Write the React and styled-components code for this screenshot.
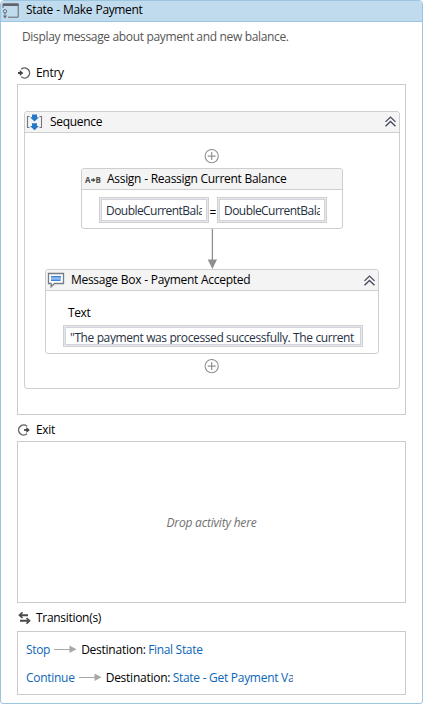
import React from "react";
import styled, { createGlobalStyle } from "styled-components";

const GlobalStyle = createGlobalStyle`
  * { box-sizing: border-box; }
  body { margin: 0; background: #fff; }
`;

const StateFrame = styled.main`
  width: 423px;
  height: 704px;
  border: 1px solid #9cc5e0;
  border-radius: 4px 4px 3px 3px;
  background: #fff;
  font: 12px/16px "Open Sans", "Noto Sans", sans-serif;
  color: #000;
  overflow: hidden;
`;

const StateHeader = styled.header`
  display: flex;
  align-items: center;
  height: 21px;
  padding-left: 1px;
  background: #c1dbee;
  border-bottom: 1px solid #9cc5e0;
`;

const Label = styled.span`
  white-space: nowrap;
  letter-spacing: ${(p) => p.$track ?? -0.3}px;
  word-spacing: ${(p) => p.$words ?? 0}px;
`;

const HeaderTitle = styled(Label)`
  margin: -2px 0 0 6px;
`;

const Annotation = styled.p`
  margin: 7px 0 0 21px;
  color: #555;
  white-space: nowrap;
  letter-spacing: ${(p) => p.$track}px;
`;

const SectionTitle = styled.h2`
  display: flex;
  align-items: center;
  gap: 5px;
  height: 16px;
  margin: ${(p) => p.$top}px 0 0 16px;
  font-size: 12px;
  font-weight: 400;
`;

const Panel = styled.section`
  width: 389px;
  height: ${(p) => p.$height}px;
  margin: ${(p) => p.$top}px 0 0 16px;
  border: 1px solid #cbcbcb;
`;

const Card = styled.article`
  width: ${(p) => p.$width}px;
  height: ${(p) => p.$height}px;
  flex: none;
  border: 1px solid #cecece;
  border-radius: 3px;
  background: #fff;
  overflow: hidden;
`;

const SequenceCard = styled(Card)`
  margin: 26px 0 0 6px;
`;

const CardHeader = styled.header`
  display: flex;
  align-items: center;
  height: 21px;
  padding: 0 3px ${(p) => p.$lift ?? 1}px ${(p) => p.$left}px;
  gap: ${(p) => p.$gap}px;
  background: #f4f4f4;
  border-bottom: 1px solid #cecece;

  svg:last-child { margin-left: auto; }
`;

const Flow = styled.div`
  display: flex;
  flex-direction: column;
  align-items: center;
  padding-top: 16px;
`;

const DropPoint = styled.svg`
  display: block;
  flex: none;
  margin-bottom: ${(p) => p.$below ?? 0}px;
  margin-top: ${(p) => p.$above ?? 0}px;
`;

const Connector = styled.svg`
  display: block;
  flex: none;
`;

const AssignBody = styled.div`
  display: flex;
  align-items: center;
  padding: 7px 0 0 17px;
`;

const Equals = styled.span`
  width: 8px;
  text-align: center;
  line-height: 16px;
  margin-top: 5px;
`;

const Field = styled.div`
  width: ${(p) => p.$width}px;
  height: ${(p) => p.$height}px;
  border: 1px solid #d0d0d0;
  padding: 1px;
  background: #e6e7ea;
`;

const FieldInner = styled.div`
  height: 100%;
  border: 1px solid #d1d4da;
  background: #fff;
  padding: ${(p) => p.$pad};
`;

const Expression = styled.div`
  height: 100%;
  overflow: hidden;
  white-space: nowrap;
  color: #263042;
  letter-spacing: ${(p) => p.$track}px;
`;

const MessageBody = styled.div`
  padding: 14px 0 0 17px;
`;

const FieldLabel = styled.div`
  margin: 0 0 4px 5px;
  letter-spacing: -0.4px;
`;

const DropHint = styled.div`
  height: 100%;
  display: flex;
  align-items: center;
  justify-content: center;
  padding-top: 1px;
  color: #6f6f6f;
  font-style: italic;
  letter-spacing: ${(p) => p.$track}px;
`;

const TransitionRow = styled.div`
  display: flex;
  align-items: center;
  height: 28px;
  padding-left: 8px;

  &:first-child { margin-top: 4px; }
`;

const Link = styled.a`
  color: #0c66b8;
  white-space: nowrap;
  overflow: hidden;
  letter-spacing: ${(p) => p.$track ?? -0.25}px;
  width: ${(p) => (p.$width ? p.$width + "px" : "auto")};
`;

const RowArrow = styled.svg`
  display: block;
  flex: none;
  margin: -3px 4px 0 4px;
`;

const Destination = styled(Label)`
  width: 67px;
  flex: none;
`;

const StateIcon = () => (
  <svg width="18" height="18" viewBox="0 0 18 18" fill="none">
    <path d="M1 6V2H16.2V15.2H6" stroke="#62666b" />
    <path d="M1 2.8H16.5" stroke="#62666b" strokeWidth="2.4" />
    <circle cx="3" cy="9.3" r="1.7" stroke="#686e74" />
    <path d="M3 11V13" stroke="#686e74" />
    <path d="M.8 13.5H5.2L3 16.5Z" fill="#686e74" />
  </svg>
);

const EntryIcon = () => (
  <svg width="14" height="14" viewBox="0 0 14 14" fill="none">
    <path d="M4.2 3.3A5 5 0 1 1 4.2 10.7" stroke="#666" strokeWidth="1.5" />
    <path d="M1 7H4.5" stroke="#444" strokeWidth="1.8" />
    <path d="M2.8 3.9L6.3 7L2.8 10.1Z" fill="#444" />
  </svg>
);

const ExitIcon = () => (
  <svg width="14" height="14" viewBox="0 0 14 14" fill="none">
    <path d="M10 3.3A5 5 0 1 0 10 10.7" stroke="#666" strokeWidth="1.5" />
    <path d="M7 7H10" stroke="#444" strokeWidth="1.8" />
    <path d="M9.3 3.9L12.8 7L9.3 10.1Z" fill="#444" />
  </svg>
);

const TransitionsIcon = () => (
  <svg width="14" height="14" viewBox="0 0 14 14" fill="none">
    <path d="M3 4.2H11M3 9.8H11" stroke="#4a4a4a" strokeWidth="2" />
    <path d="M5.5 1.4L2.5 4.2L5.5 7M9.5 7L12.5 9.8L9.5 12.6" stroke="#4a4a4a" strokeWidth="1.7" />
  </svg>
);

const SequenceIcon = () => (
  <svg width="17" height="18" viewBox="0 0 17 18" fill="none">
    <path d="M3.5 3.5H1.5V14.5H3.5M13.5 3.5H15.5V14.5H13.5" stroke="#777" strokeWidth="1.1" />
    <path d="M6 1.5H11V4.3H13L8.5 8.5L4 4.3H6Z" fill="#2777c9" />
    <path d="M6 10.2H11V13H13L8.5 17.2L4 13H6Z" fill="#2777c9" />
  </svg>
);

const AssignGlyph = styled.span`
  width: 17px;
  font: 700 8px/12px "Open Sans", sans-serif;
  color: #4b4b4b;
  display: flex;
  align-items: center;
  margin-top: 2px;
`;

const AssignIcon = () => (
  <AssignGlyph>
    <span>A</span>
    <svg width="5" height="6" viewBox="0 0 5 6">
      <path d="M0 3H2.5" stroke="#4b4b4b" strokeWidth="1.5" />
      <path d="M1.8 .8L4.6 3L1.8 5.2Z" fill="#4b4b4b" />
    </svg>
    <span>B</span>
  </AssignGlyph>
);

const MessageIcon = () => (
  <svg width="18" height="16" viewBox="0 0 18 16" fill="none">
    <path d="M1.5 1.5H16.5V11.5H7.5L4.2 14.7V11.5H1.5Z" fill="#fff" stroke="#747c85" strokeWidth="1.3" />
    <path d="M4 4H14V9H4Z" fill="#8dbcf0" />
    <path d="M4 4.7H14M4 8.3H13" stroke="#3d83d2" strokeWidth="1.2" />
  </svg>
);

const CollapseIcon = () => (
  <svg width="11" height="11" viewBox="0 0 11 11" fill="none">
    <path d="M.5 5.9L5.5 1.1L10.5 5.9M.5 10.3L5.5 5.5L10.5 10.3" stroke="#444a5a" strokeWidth="1.3" />
  </svg>
);

const AddPoint = (props) => (
  <DropPoint width="16" height="15" viewBox="0 0 16 15" fill="none" {...props}>
    <circle cx="7.7" cy="7.1" r="6.6" stroke="#929292" strokeWidth="1.1" />
    <path d="M3.7 7.1H11.7M7.7 3.1V11.1" stroke="#929292" strokeWidth="1.2" />
  </DropPoint>
);

const TransitionArrow = () => (
  <RowArrow width="23" height="8" viewBox="0 0 23 8">
    <path d="M0 4.5H16" stroke="#a8a8a8" />
    <path d="M15.5 .5V8L22.5 4.2Z" fill="#a8a8a8" />
  </RowArrow>
);

const transitions = [
  { name: "Stop", track: -0.32, target: "Final State" },
  { name: "Continue", track: -0.28, target: "State - Get Payment Validation", width: 120 },
];

export default function App() {
  return (
    <>
      <GlobalStyle />
      <StateFrame>
        <StateHeader>
          <StateIcon />
          <HeaderTitle $track={-0.35} $words={0.6}>State - Make Payment</HeaderTitle>
        </StateHeader>
        <Annotation $track={-0.34}>Display message about payment and new balance.</Annotation>

        <SectionTitle $top={20}><EntryIcon /><Label>Entry</Label></SectionTitle>
        <Panel $top={3} $height={331}>
          <SequenceCard $width={376} $height={278}>
            <CardHeader $left={1} $gap={7}>
              <SequenceIcon /><Label>Sequence</Label><CollapseIcon />
            </CardHeader>
            <Flow>
              <AddPoint $below={4} />
              <Card $width={262} $height={61}>
                <CardHeader $left={3} $gap={5}>
                  <AssignIcon /><Label $words={0.2}>Assign - Reassign Current Balance</Label>
                </CardHeader>
                <AssignBody>
                  <Field $width={110} $height={26}>
                    <FieldInner $pad="3px 4px 0 4px"><Expression $track={-0.55}>DoubleCurrentBalance</Expression></FieldInner>
                  </Field>
                  <Equals>=</Equals>
                  <Field $width={110} $height={26}>
                    <FieldInner $pad="3px 4px 0 4px"><Expression $track={-0.55}>DoubleCurrentBalance</Expression></FieldInner>
                  </Field>
                </AssignBody>
              </Card>
              <Connector width="10" height="40" viewBox="0 0 10 40">
                <path d="M5.4 0V32" stroke="#8f8f8f" strokeWidth="1.3" />
                <path d="M.7 30.5H10L5.4 40Z" fill="#8f8f8f" />
              </Connector>
              <Card $width={334} $height={85}>
                <CardHeader $left={1} $gap={6} $lift={0}>
                  <MessageIcon /><Label $words={0.2}>Message Box - Payment Accepted</Label><CollapseIcon />
                </CardHeader>
                <MessageBody>
                  <FieldLabel>Text</FieldLabel>
                  <Field $width={300} $height={22}>
                    <FieldInner $pad="2px 4px 0 4px"><Expression $track={-0.39}>"The payment was processed successfully. The current</Expression></FieldInner>
                  </Field>
                </MessageBody>
              </Card>
              <AddPoint $above={5} />
            </Flow>
          </SequenceCard>
        </Panel>

        <SectionTitle $top={7}><ExitIcon /><Label>Exit</Label></SectionTitle>
        <Panel $top={3} $height={162}>
          <DropHint $track={-0.2}>Drop activity here</DropHint>
        </Panel>

        <SectionTitle $top={7}><TransitionsIcon /><Label>Transition(s)</Label></SectionTitle>
        <Panel $top={5} $height={64}>
          {transitions.map((t) => (
            <TransitionRow key={t.name}>
              <Link $track={t.track}>{t.name}</Link>
              <TransitionArrow />
              <Destination $track={-0.25}>Destination:</Destination>
              <Link $track={t.track} $width={t.width}>{t.target}</Link>
            </TransitionRow>
          ))}
        </Panel>
      </StateFrame>
    </>
  );
}
